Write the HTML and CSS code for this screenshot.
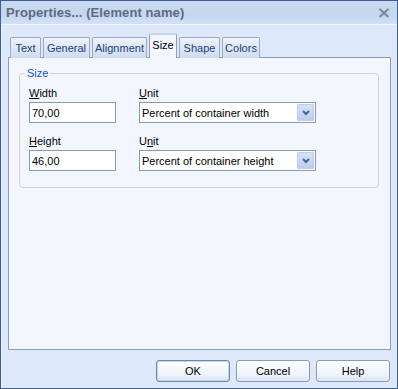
FILE: index.html
```html
<!DOCTYPE html>
<html lang="en">
<head>
    <meta charset="UTF-8">
    <title>Properties... (Element name)</title>
    <link rel="stylesheet" href="styles.css">
</head>
<body>
    <div class="window">
        <div class="titlebar">
            <span class="title">Properties... (Element name)</span>
            <svg class="close" width="12" height="10" viewBox="0 0 12 10">
                <path d="M1.5 1 L10.5 9 M10.5 1 L1.5 9" stroke="#7c8797" stroke-width="2" fill="none"/>
            </svg>
        </div>

        <div class="content">
            <!-- Tabs -->
            <div class="tabs">
                <div class="tab tab-text">Text</div>
                <div class="tab tab-general">General</div>
                <div class="tab tab-align">Alignment</div>
                <div class="tab tab-size active">Size</div>
                <div class="tab tab-shape">Shape</div>
                <div class="tab tab-colors">Colors</div>
            </div>

            <div class="panel">
                <fieldset class="group">
                    <legend>Size</legend>
                    <div class="field-grid">
                        <label class="lbl"><u>W</u>idth</label>
                        <label class="lbl"><u>U</u>nit</label>
                        <div class="textbox">70,00</div>
                        <div class="combo">
                            <span>Percent of container width</span>
                            <span class="drop">
                                <svg width="8" height="6" viewBox="0 0 8 6"><path d="M1 1 L4 4 L7 1" stroke="#4d6185" stroke-width="2" fill="none"/></svg>
                            </span>
                        </div>
                        <label class="lbl second"><u>H</u>eight</label>
                        <label class="lbl second">U<u>n</u>it</label>
                        <div class="textbox">46,00</div>
                        <div class="combo">
                            <span>Percent of container height</span>
                            <span class="drop">
                                <svg width="8" height="6" viewBox="0 0 8 6"><path d="M1 1 L4 4 L7 1" stroke="#4d6185" stroke-width="2" fill="none"/></svg>
                            </span>
                        </div>
                    </div>
                </fieldset>
            </div>

            <div class="buttons">
                <button class="default">OK</button>
                <button>Cancel</button>
                <button>Help</button>
            </div>
        </div>
    </div>
</body>
</html>
```

FILE: styles.css
```css
* {
    margin: 0;
    padding: 0;
    box-sizing: border-box;
}

body {
    font-family: 'Liberation Sans', Arial, sans-serif;
    font-size: 11px;
    background: #dde8f8;
}

.window {
    width: 398px;
    height: 389px;
    border: 1px solid #3f5f91;
    background: #dde8f8;
    display: flex;
    flex-direction: column;
}

.titlebar {
    height: 24px;
    padding: 0 7px 0 5px;
    display: flex;
    align-items: center;
    justify-content: space-between;
    background: linear-gradient(to bottom, #cad9f0, #c5d6ef 60%, #d3e1f5);
    border-bottom: 1px solid #eef4fc;
}

.title {
    font-weight: bold;
    font-size: 13px;
    color: #5d6b80;
    letter-spacing: 0.1px;
}

.close {
    margin-top: 1px;
}

.content {
    flex: 1;
    display: flex;
    flex-direction: column;
    padding: 8px 6px 0 6px;
    border-left: 1px solid #eaf1fb;
}

/* Tabs */
.tabs {
    display: flex;
    align-items: flex-end;
    gap: 2px;
    margin-left: 2px;
    height: 25px;
    position: relative;
    z-index: 1;
    margin-bottom: -1px;
}

.tab {
    height: 21px;
    display: flex;
    align-items: center;
    justify-content: center;
    color: #1e3d7b;
    background: linear-gradient(to bottom, #eef3fb, #cfdcf1);
    border: 1px solid #9aaac6;
    border-bottom: none;
    border-radius: 2px 2px 0 0;
    font-size: 11px;
}

.tab-text { width: 31px; }
.tab-general { width: 47px; }
.tab-align { width: 55px; }
.tab-size { width: 28px; }
.tab-shape { width: 41px; }
.tab-colors { width: 38px; }

.tab.active {
    height: 25px;
    padding-bottom: 3px;
    color: #000;
    background: #f3f7fd;
    border-color: #8e9fbd;
    border-top: 2px solid #c8d4e6;
}

.panel {
    height: 293px;
    background: #f3f7fd;
    border: 1px solid #8c9cb9;
    padding: 8px 11px 0 10px;
}

.group {
    border: 1px solid #d2d4c8;
    border-radius: 4px;
    padding: 6px 9px 17px 9px;
    height: 122px;
}

.group legend {
    color: #1452d6;
    padding: 0 2px;
    margin-left: -4px;
    line-height: 14px;
}

.field-grid {
    display: grid;
    grid-template-columns: 87px 177px;
    column-gap: 23px;
}

.lbl {
    line-height: 14px;
    margin-bottom: 2px;
    color: #000;
}

.lbl.second {
    margin-top: 11px;
}

.textbox, .combo {
    height: 21px;
    background: #fff;
    border: 1px solid #7f9db9;
    display: flex;
    align-items: center;
    padding-left: 2px;
    font-size: 11px;
    color: #000;
}

.combo {
    justify-content: space-between;
    padding-right: 1px;
}

.drop {
    width: 17px;
    height: 17px;
    display: flex;
    align-items: center;
    justify-content: center;
    background: linear-gradient(to bottom, #d6e2fa, #b9cdf5);
    border: 1px solid #bccbee;
    border-radius: 1px;
}

/* Buttons */
.buttons {
    display: flex;
    justify-content: flex-end;
    gap: 6px;
    margin-top: 10px;
    padding-right: 1px;
}

button {
    width: 74px;
    height: 22px;
    font-family: 'Liberation Sans', Arial, sans-serif;
    font-size: 11px;
    color: #000;
    background: linear-gradient(to bottom, #fdfeff, #eef3fb 70%, #d9e3f3);
    border: 1px solid #8a9ab6;
    border-radius: 3px;
}

button.default {
    border-color: #6f86b0;
    box-shadow: inset 0 0 0 1px #c5d5f1;
}
```
